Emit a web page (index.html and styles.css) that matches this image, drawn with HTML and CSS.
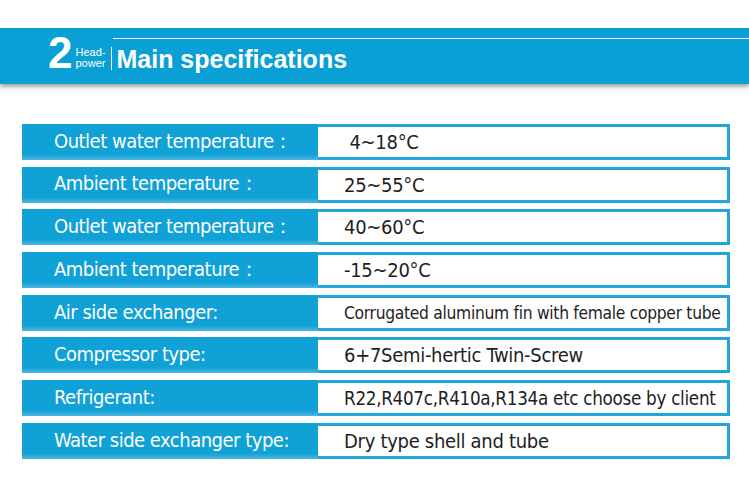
FILE: index.html
```html
<!DOCTYPE html>
<html lang="en">
<head>
  <meta charset="UTF-8">
  <meta name="viewport" content="width=device-width, initial-scale=1.0">
  <title>Main specifications</title>
  <link rel="stylesheet" href="styles.css">
</head>
<body>
  <div class="banner">
    <div class="banner-title">
      <span class="num">2</span>
      <span class="sub">Head-<br>power</span>
      <span class="divider"></span>
      <h1>Main specifications</h1>
    </div>
  </div>

  <div class="specs">
    <div class="row">
      <div class="label">Outlet water temperature：</div>
      <div class="value">&nbsp;4~18°C</div>
    </div>
    <div class="row">
      <div class="label">Ambient temperature：</div>
      <div class="value">25~55°C</div>
    </div>
    <div class="row">
      <div class="label">Outlet water temperature：</div>
      <div class="value">40~60°C</div>
    </div>
    <div class="row">
      <div class="label">Ambient temperature：</div>
      <div class="value">-15~20°C</div>
    </div>
    <div class="row">
      <div class="label">Air side exchanger:</div>
      <div class="value small">Corrugated aluminum fin with female copper tube</div>
    </div>
    <div class="row">
      <div class="label">Compressor type:</div>
      <div class="value">6+7Semi-hertic Twin-Screw</div>
    </div>
    <div class="row">
      <div class="label">Refrigerant:</div>
      <div class="value mid">R22,R407c,R410a,R134a etc choose by client</div>
    </div>
    <div class="row">
      <div class="label">Water side exchanger type:</div>
      <div class="value">Dry type shell and tube</div>
    </div>
  </div>
</body>
</html>
```

FILE: styles.css
```css
:root {
  --blue: #0a9fd5;
  --label-blue: #10a1d6;
  --border-blue: #22a6d8;
  --text-dark: #1e1e1e;
}
* {
  box-sizing: border-box;
  margin: 0;
  padding: 0;
}
body {
  background: #fff;
  width: 749px;
  height: 495px;
  overflow: hidden;
  padding-top: 28px;
}
.banner {
  position: relative;
  height: 56px;
  background: var(--blue);
  box-shadow: 0 3px 4px rgba(0, 0, 0, 0.35);
  color: #fff;
  font-family: "Liberation Sans", Arial, sans-serif;
}
.banner::before {
  content: "";
  position: absolute;
  left: 113px;
  right: 0;
  top: 10px;
  height: 1px;
  background: #fff;
}
.banner-title {
  display: flex;
  align-items: flex-end;
  padding-left: 48px;
  height: 100%;
  padding-bottom: 14px;
}
.num {
  font-size: 44px;
  font-weight: bold;
  line-height: 34px;
  letter-spacing: -2px;
}
.sub {
  font-size: 11px;
  line-height: 11px;
  margin-left: 5px;
  margin-bottom: 1px;
}
.divider {
  width: 1px;
  height: 23px;
  background: #fff;
  margin-left: 6px;
  margin-right: 4px;
}
h1 {
  font-size: 25px;
  font-weight: bold;
  line-height: 22px;
}
.specs {
  margin-top: 40px;
  padding-left: 22px;
  display: flex;
  flex-direction: column;
  gap: 6.7px;
  font-family: "DejaVu Sans Condensed", "DejaVu Sans", sans-serif;
}
.row {
  display: flex;
  width: 708px;
  height: 36px;
}
.label {
  width: 296px;
  background: linear-gradient(to bottom, var(--label-blue) 85%, #4fb8e0);
  color: #fff;
  font-size: 20px;
  letter-spacing: -0.5px;
  padding-left: 32px;
  display: flex;
  align-items: center;
  padding-bottom: 2px;
}
.value {
  flex: 1;
  background: #fff;
  border: 3px solid var(--border-blue);
  border-left: none;
  color: var(--text-dark);
  font-size: 20px;
  letter-spacing: -0.3px;
  padding-left: 26px;
  display: flex;
  align-items: center;
}
.value.mid {
  font-size: 18.7px;
}
.value.small {
  font-size: 17.3px;
}
```
